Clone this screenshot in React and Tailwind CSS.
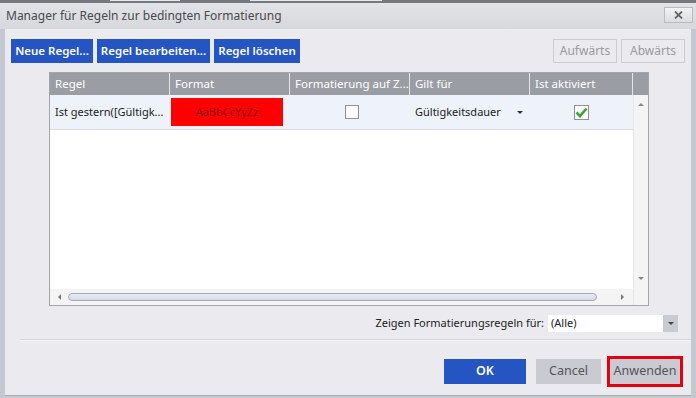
import React from 'react'

const FONT = { fontFamily: '"Noto Sans", "Open Sans", sans-serif' }

const COLS = [
  { label: 'Regel', w: 'w-[120px]' },
  { label: 'Format', w: 'w-[120px]' },
  { label: 'Formatierung auf Z...', w: 'w-[120px]' },
  { label: 'Gilt für', w: 'w-[120px]' },
  { label: 'Ist aktiviert', w: 'w-[103px]' },
]

function BlueButton({ children, className = '' }) {
  return (
    <button className={`h-[24px] whitespace-nowrap bg-[#2455c3] text-center text-[11.5px] font-semibold text-white ${className}`}>
      {children}
    </button>
  )
}

function GhostButton({ children, className = '' }) {
  return (
    <button className={`h-[24px] whitespace-nowrap border border-[#cdcdd1] text-center text-[12px] text-[#9a9a9e] ${className}`}>
      {children}
    </button>
  )
}

function Caret({ dir = 'down', className = '' }) {
  const paths = {
    down: 'M0 0 L6 0 L3 3 Z',
    up: 'M0 3 L6 3 L3 0 Z',
    left: 'M3 0 L3 6 L0 3 Z',
    right: 'M0 0 L0 6 L3 3 Z',
  }
  const size = dir === 'up' || dir === 'down' ? { w: 6, h: 3 } : { w: 3, h: 6 }
  return (
    <svg width={size.w} height={size.h} viewBox={`0 0 ${size.w} ${size.h}`} className={className}>
      <path d={paths[dir]} fill="currentColor" />
    </svg>
  )
}

export default function App() {
  return (
    <div style={FONT} className="flex h-[398px] w-[696px] flex-col overflow-hidden bg-[#c6c8cf]">
      {/* desktop strip behind the dialog */}
      <div className="flex h-[3px] shrink-0 bg-[#76787e]">
        <div className="ml-[110px] h-[1px] w-[70px] bg-[#e8e8ea]" />
        <div className="ml-[70px] h-[1px] w-[132px] bg-[#e8e8ea]" />
      </div>

      {/* title bar */}
      <div className="flex h-[26px] shrink-0 items-center justify-between bg-[linear-gradient(180deg,#e2e3e6_0%,#d7d8dc_100%)] pl-[6px] pr-[3px]">
        <span className="text-[12px] text-[#4a4a4e]">Manager für Regeln zur bedingten Formatierung</span>
        <button className="mb-[2px] flex h-[16px] w-[29px] items-center justify-center border border-[#b9bbc1] bg-[linear-gradient(180deg,#f2f2f4_0%,#dcdde1_100%)] text-[#666]">
          <svg width="9" height="8" viewBox="0 0 9 8">
            <path d="M1 0.5 L8 7.5 M8 0.5 L1 7.5" stroke="currentColor" strokeWidth="1.8" />
          </svg>
        </button>
      </div>

      {/* body */}
      <div className="mx-[5px] mb-[2px] flex min-h-0 flex-1 flex-col border-b border-[#a9abb2] bg-[#ebebef] pt-[10px]">
        <div className="flex items-center px-[6px]">
          <BlueButton className="w-[82px]">Neue Regel...</BlueButton>
          <BlueButton className="ml-[4px] w-[113px]">Regel bearbeiten...</BlueButton>
          <BlueButton className="ml-[4px] w-[86px]">Regel löschen</BlueButton>
          <GhostButton className="ml-auto w-[64px]">Aufwärts</GhostButton>
          <GhostButton className="ml-[4px] w-[64px]">Abwärts</GhostButton>
        </div>

        {/* rules table */}
        <div className="ml-[44px] mt-[9px] flex h-[234px] w-[600px] flex-col border border-[#a3a5ab] bg-white">
          <div className="flex h-[22px] shrink-0 bg-[#9b9da4] text-[11.5px] text-white">
            {COLS.map((c) => (
              <div key={c.label} className={`${c.w} flex items-center overflow-hidden whitespace-nowrap border-r border-[#e4e5e8] pl-[5px]`}>
                {c.label}
              </div>
            ))}
            <div className="flex-1" />
          </div>

          <div className="flex min-h-0 flex-1">
            <div className="flex w-[583px] flex-col">
              <div className="flex h-[35px] items-center border-b border-[#d9dbe0] bg-[#eef2fa] text-[11px] text-[#222]">
                <div className="w-[120px] overflow-hidden whitespace-nowrap pl-[5px]">Ist gestern([Gültigk...</div>
                <div className="flex w-[120px] items-center pl-[1px]">
                  <div className="flex h-[28px] w-[112px] items-center justify-center bg-[#ff0000] text-[11px] text-[#8f0000]">
                    AaBbCcYyZz
                  </div>
                </div>
                <div className="flex w-[120px] justify-center pl-[4px]">
                  <div className="h-[14px] w-[14px] border border-[#8f9196] bg-white" />
                </div>
                <div className="flex w-[120px] items-center justify-between pl-[5px] pr-[7px]">
                  <span>Gültigkeitsdauer</span>
                  <Caret className="text-[#333]" />
                </div>
                <div className="flex w-[103px] justify-center">
                  <div className="flex h-[15px] w-[15px] items-center justify-center border border-[#8f9196] bg-white">
                    <svg width="13" height="11" viewBox="0 0 13 11">
                      <path d="M1.5 5.5 L5 9 L11.5 1.5" stroke="#3aa335" strokeWidth="2.6" fill="none" />
                    </svg>
                  </div>
                </div>
              </div>
              <div className="flex-1" />
              {/* horizontal scrollbar */}
              <div className="flex h-[16px] shrink-0 items-center bg-[#f4f4f5] text-[#777]">
                <Caret dir="left" className="ml-[8px]" />
                <div className="ml-[7px] h-[8px] w-[529px] rounded-full border border-[#a7aab6] bg-[linear-gradient(180deg,#e8eaf2_0%,#d7dae6_100%)]" />
                <Caret dir="right" className="ml-[24px]" />
              </div>
            </div>
            {/* vertical scrollbar */}
            <div className="flex w-[15px] flex-col items-center border-l border-[#e6e6e8] bg-[#f4f4f5] text-[#888]">
              <Caret dir="up" className="mt-[8px]" />
              <div className="flex-1" />
              <Caret dir="down" className="mb-[25px]" />
            </div>
          </div>
        </div>

        {/* filter row */}
        <div className="mt-[9px] flex items-center justify-end pr-[13px] text-[11px] text-[#222]">
          <span className="mr-[4px]">Zeigen Formatierungsregeln für:</span>
          <div className="flex h-[17px] w-[130px] items-center bg-white">
            <span className="flex-1 pl-[3px]">(Alle)</span>
            <div className="flex h-full w-[15px] items-center justify-center bg-[#c9cbd2] text-[#444]">
              <Caret />
            </div>
          </div>
        </div>

        <div className="ml-[15px] mt-[7px] h-[1px] bg-[#d6d7dc] shadow-[0_1px_0_#f7f7f9]" />

        {/* dialog buttons */}
        <div className="mt-[16px] flex items-center justify-end pr-[8px] text-[12.5px]">
          <button className="h-[25px] w-[82px] bg-[#2455c3] font-semibold text-white">OK</button>
          <button className="ml-[10px] h-[25px] w-[65px] bg-[#c9cad2] text-[#555]">Cancel</button>
          <div className="ml-[6px] border-[3px] border-[#e3000f]">
            <button className="h-[25px] w-[70px] bg-[#c9cad2] text-[#555]">Anwenden</button>
          </div>
        </div>
      </div>
    </div>
  )
}
